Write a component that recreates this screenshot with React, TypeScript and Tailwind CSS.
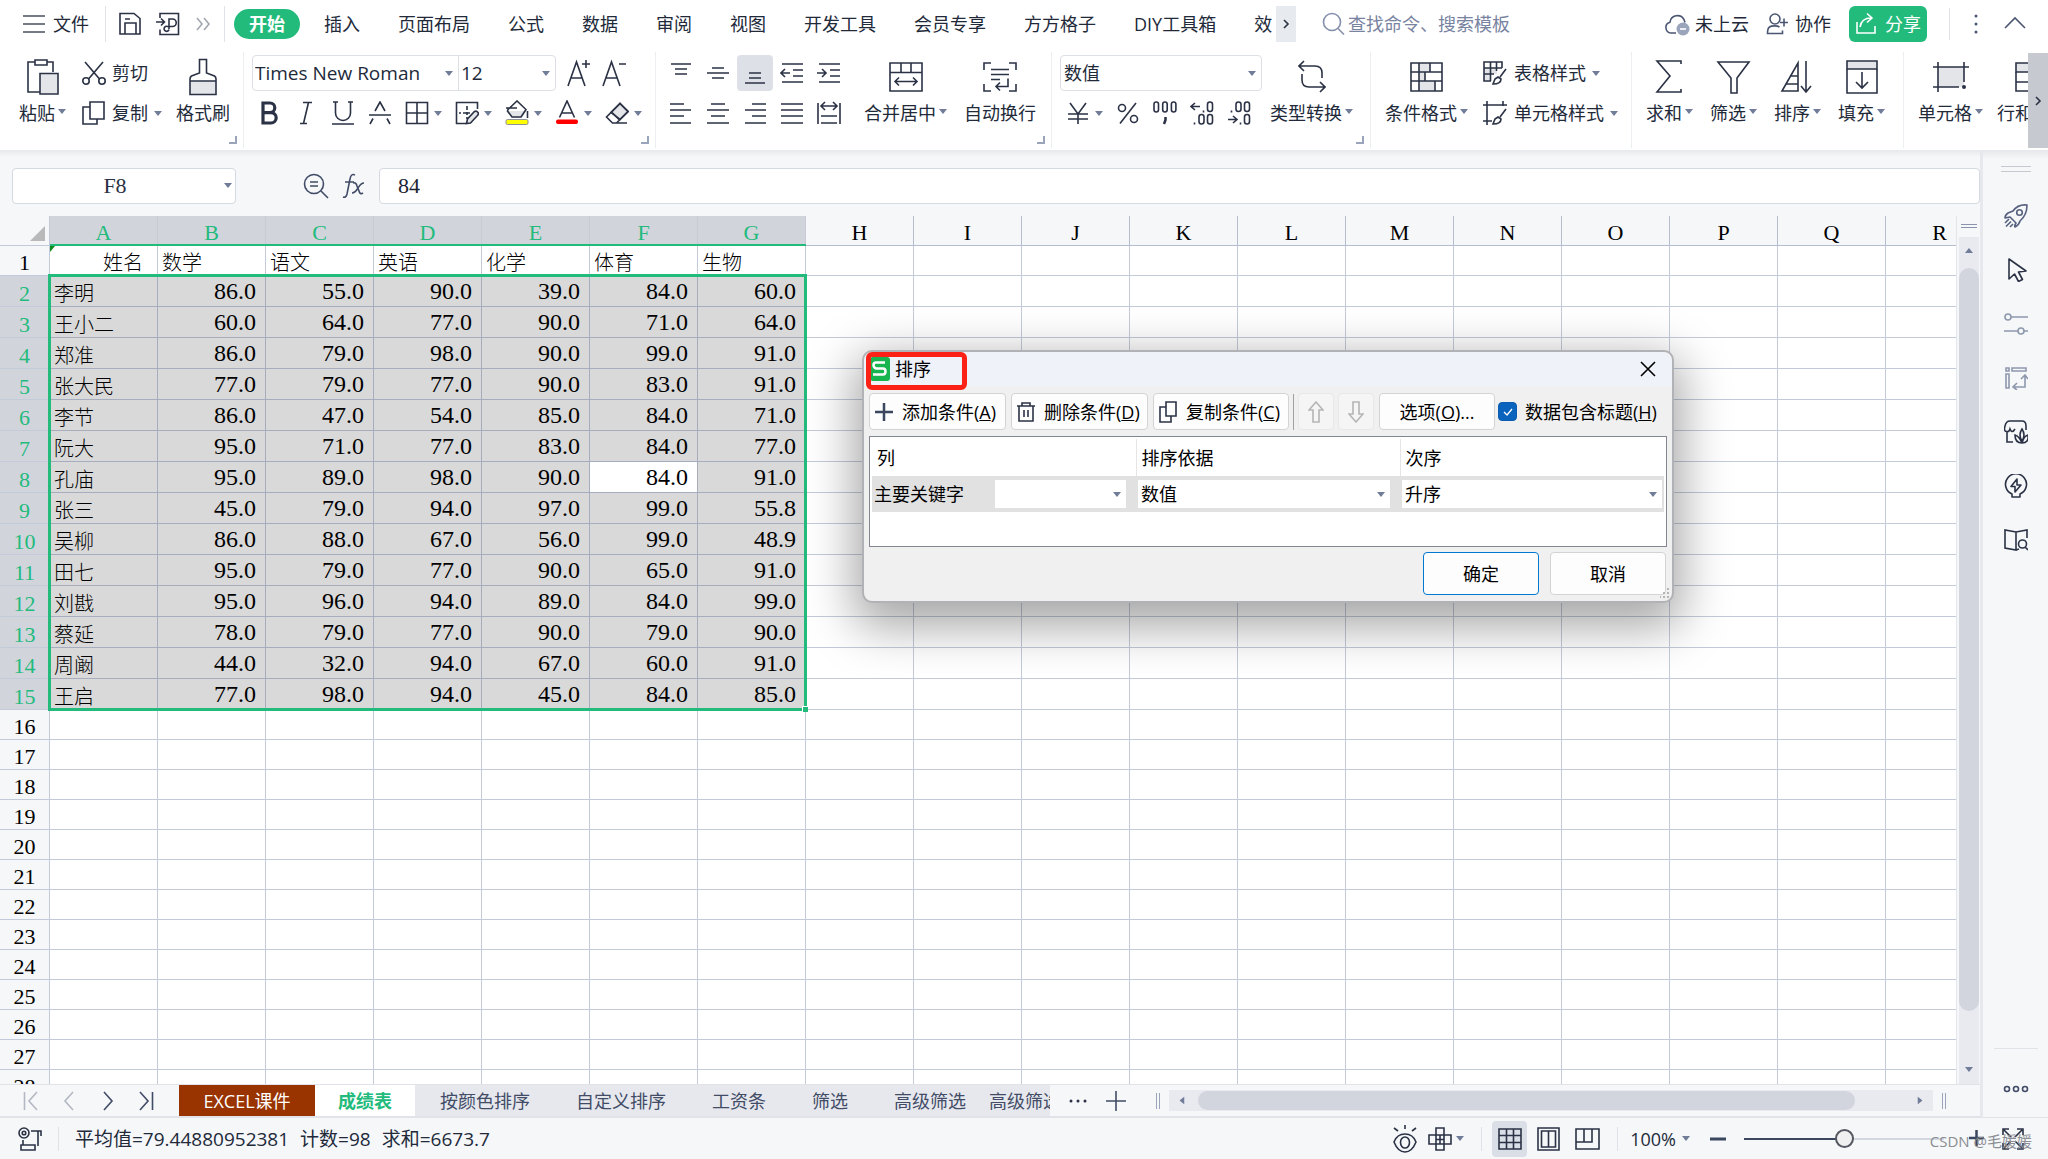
import type { ReactNode } from "react";

type IconProps = { w?: number; h?: number; className?: string; children: ReactNode };

function Icon({ w = 24, h = 24, className = "text-[#2b3245]", children }: IconProps) {
  return (
    <svg
      width={w}
      height={h}
      viewBox={`0 0 ${w} ${h}`}
      fill="none"
      stroke="currentColor"
      strokeWidth="1.6"
      className={`shrink-0 ${className}`}
      aria-hidden="true"
    >
      {children}
    </svg>
  );
}

function Caret({ className = "" }: { className?: string }) {
  return (
    <svg width="8" height="5" viewBox="0 0 8 5" className={`shrink-0 ${className}`} aria-hidden="true">
      <path d="M0 0h8L4 5z" fill="#707c98" />
    </svg>
  );
}

function BigButton({ icon, label, caret = true }: { icon: ReactNode; label: string; caret?: boolean }) {
  return (
    <button className="flex shrink-0 flex-col items-center">
      <span className="flex h-11 items-center">{icon}</span>
      <span className="flex h-7 items-center gap-[3px] whitespace-nowrap">
        {label}
        {caret && <Caret className="-mt-1" />}
      </span>
    </button>
  );
}

function RowButton({ icon, label, caret = true }: { icon: ReactNode; label: string; caret?: boolean }) {
  return (
    <button className="flex h-9 items-center gap-[6px] whitespace-nowrap">
      {icon}
      {label}
      {caret && <Caret />}
    </button>
  );
}

function IconButton({ label, caret = false, children }: { label: string; caret?: boolean; children: ReactNode }) {
  return (
    <button aria-label={label} className="flex h-9 items-center gap-[5px]">
      {children}
      {caret && <Caret />}
    </button>
  );
}

function Group({ className = "", corner = false, children }: { className?: string; corner?: boolean; children: ReactNode }) {
  return (
    <div className={`relative my-1 flex h-24 shrink-0 items-start border-r border-[#eceef1] pt-[3px] ${className}`}>
      {children}
      {corner && <span className="absolute right-[6px] bottom-1 h-2 w-2 border-r-2 border-b-2 border-[#9aa4ba]" />}
    </div>
  );
}

function Select({ label, value, className = "", selectClass = "" }: { label: string; value: string; className?: string; selectClass?: string }) {
  return (
    <div className={`relative flex items-center ${className}`}>
      <select aria-label={label} className={`h-full w-full appearance-none bg-transparent outline-none ${selectClass}`}>
        <option>{value}</option>
      </select>
      <Caret className="pointer-events-none absolute right-[5px]" />
    </div>
  );
}

const menuItems = ["插入", "页面布局", "公式", "数据", "审阅", "视图", "开发工具", "会员专享", "方方格子", "DIY工具箱", "效"];

function MenuBar() {
  return (
    <nav className="flex h-12 items-center">
      <button className="ml-[22px] flex items-center gap-[7px]">
        <Icon className="text-[#4a4f5c]">
          <path d="M1 4h22M1 12h22M1 20h22" />
        </Icon>
        文件
      </button>
      <span className="ml-4 h-9 w-px bg-[#dfe2e8]" />
      <button aria-label="保存" className="ml-3">
        <Icon>
          <path d="M2 1.500h14l6 5v15.500h-20zM7 22v-11h11v11M7 7h5" />
        </Icon>
      </button>
      <button aria-label="输出为PDF" className="ml-[14px]">
        <Icon>
          <path d="M4 6v-4.500h18.500v21h-18.500v-5M0 10h8M5 6.500l3.500 3.500L5 13.500" />
          <path d="M13 17v-10h3.500a3.500 3.500 0 0 1 0 7.500h-5a2.500 2.500 0 1 0 1.500 3" />
        </Icon>
      </button>
      <button aria-label="更多" className="ml-4">
        <Icon w={14} className="text-[#a2a6b0]">
          <path d="M1 6l5 6-5 6M8 6l5 6-5 6" />
        </Icon>
      </button>
      <span className="ml-[14px] h-9 w-px bg-[#dfe2e8]" />
      <button className="ml-[9px] h-[30px] rounded-full bg-[#22bb7c] px-[15px] font-bold text-white">开始</button>
      <div className="ml-6 flex w-[952px] shrink-0 gap-[38px] overflow-hidden whitespace-nowrap">
        {menuItems.map((item) => (
          <button key={item} className="shrink-0">
            {item}
          </button>
        ))}
      </div>
      <button aria-label="向右滚动" className="flex h-9 w-5 shrink-0 items-center justify-center bg-[#e7eaef]">
        <Icon w={8} h={12}>
          <path d="M2 2l4 4-4 4" />
        </Icon>
      </button>
      <label className="ml-[26px] flex min-w-0 items-center gap-[2px]">
        <Icon className="text-[#8590ac]">
          <circle cx="10" cy="10" r="8.500" />
          <path d="M16 16.500l6 6" />
        </Icon>
        <input
          aria-label="搜索"
          placeholder="查找命令、搜索模板"
          className="w-44 bg-transparent outline-none placeholder:text-[#78839f]"
        />
      </label>
      <div className="ml-auto flex shrink-0 items-center whitespace-nowrap">
        <button className="flex items-center gap-[5px]">
          <Icon w={26} className="text-[#4b5672]">
            <path d="M12 21H7a5.500 5.500 0 0 1-1-10.800A7.500 7.500 0 0 1 20 7.500l1 3" />
            <circle cx="19" cy="17" r="6.500" fill="#9aa5bb" stroke="none" />
            <path d="M16 17h6" stroke="#fff" />
          </Icon>
          未上云
        </button>
        <button className="ml-[17px] flex items-center gap-[7px]">
          <Icon w={22} className="text-[#4b5672]">
            <circle cx="9" cy="7" r="5" />
            <path d="M13.500 15c-2-1.500-8-1.500-10 0-1.500 1-2 3-2 6.500h15v-3M14 10.500h8M18 6.500v8" />
          </Icon>
          协作
        </button>
        <button className="ml-[18px] flex h-9 w-[78px] items-center justify-center gap-2 rounded-md bg-[#22bb7c] text-white">
          <Icon w={22} className="text-white">
            <path d="M2 10v11h18v-7M5 15c1-6 5-9 11-9M12 1.500l5 4.500-5 4.500" />
          </Icon>
          分享
        </button>
        <span className="ml-[22px] h-8 w-px bg-[#dfe2e8]" />
        <button aria-label="更多选项" className="ml-[23px]">
          <Icon w={6} className="text-[#4b5672]">
            <path d="M3 4v.1M3 12v.1M3 20v.1" strokeWidth="3" strokeLinecap="round" />
          </Icon>
        </button>
        <button aria-label="收起功能区" className="mr-[22px] ml-[25px]">
          <Icon w={22} className="text-[#4b5672]">
            <path d="M1 16L11 6l10 10" />
          </Icon>
        </button>
      </div>
    </nav>
  );
}

const alignTop = [
  { label: "顶端对齐", d: "M2 3h20M6 8h12M6 13h12" },
  { label: "垂直居中", d: "M1 12h22M6 7h12M6 17h12" },
  { label: "底端对齐", d: "M2 22h20M6 17h12M6 12h12" },
  { label: "减少缩进", d: "M2 3h21M13 9h10M13 15h10M2 21h21M1 12h9M5 8l-4 4 4 4" },
  { label: "增加缩进", d: "M2 3h21M13 9h10M13 15h10M2 21h21M0 12h9M5 8l4 4-4 4" },
];

const alignBottom = [
  { label: "左对齐", d: "M1 3h14M1 9h21M1 15h14M1 22h21" },
  { label: "居中", d: "M5 3h14M1 9h22M5 15h14M1 22h22" },
  { label: "右对齐", d: "M9 3h14M2 9h21M9 15h14M2 22h21" },
  { label: "两端对齐", d: "M1 3h22M1 9h22M1 15h22M1 22h22" },
  { label: "分散对齐", d: "M1 2v21M23 2v21M4 5h16M8 1L4 5l4 4M16 1l4 4-4 4M4 15h16M4 22h16" },
];

const tallIcons = [
  { label: "求和", d: "M29 5v-3H5l13 15L5 33h24v-3" },
  { label: "筛选", d: "M2 3h31L21 19v15h-6v-15z" },
  { label: "排序", d: "M18 4v28H2zM11 17h7M6 25h12M26 2v31M21 27l5 6 5-6" },
];

function Ribbon() {
  return (
    <div className="flex h-[102px] items-start">
      <div className="flex min-w-0 flex-1 overflow-hidden">
        <Group className="gap-[14px] pr-[13px] pl-[19px]" corner>
          <BigButton
            label="粘贴"
            icon={
              <Icon w={34} h={36}>
                <path d="M9 3H2v30h13M21 3h6v10M9 1h12v5H9z" />
                <path d="M14 14.500h18V35H14z" fill="#e3e5e8" />
              </Icon>
            }
          />
          <div className="ml-[2px] flex flex-col gap-1">
            <RowButton
              label="剪切"
              caret={false}
              icon={
                <Icon>
                  <circle cx="4" cy="20" r="3.200" />
                  <circle cx="20" cy="20" r="3.200" />
                  <path d="M3 1l14.500 17M21 1L6.500 18" />
                </Icon>
              }
            />
            <RowButton
              label="复制"
              icon={
                <Icon>
                  <path d="M8 1h14v17H8zM8 6H1v17h14v-5" />
                </Icon>
              }
            />
          </div>
          <BigButton
            label="格式刷"
            caret={false}
            icon={
              <Icon w={30} h={38}>
                <path d="M2 23h26v13H2z" fill="#e3e5e8" stroke="none" />
                <path d="M11.500 1.500h7V15l8 3q1.500 1 1.500 3v15.500H2V21q0-2 1.500-3l8-3zM2 23h26" />
              </Icon>
            }
          />
        </Group>

        <Group className="flex-col gap-1 pr-[13px] pl-2" corner>
          <div className="flex h-9 items-center">
            <div className="flex h-9 rounded border border-[#dcdfe5] text-[19px]">
              <Select label="字体" value="Times New Roman" className="w-[206px] border-r border-[#dcdfe5]" selectClass="pl-[2px]" />
              <Select label="字号" value="12" className="w-[96px]" selectClass="pl-[2px]" />
            </div>
            <button aria-label="增大字号" className="ml-[11px]">
              <Icon h={28}>
                <path d="M1 27L9.500 3 18 27M4 19h11M19 1v8M15 5h8" />
              </Icon>
            </button>
            <button aria-label="减小字号" className="ml-[11px]">
              <Icon h={28}>
                <path d="M1 27L9.500 3 18 27M4 19h11M17 5h7" />
              </Icon>
            </button>
          </div>
          <div className="ml-[5px] flex gap-[13px]">
            <IconButton label="加粗">
              <Icon>
                <path d="M6 2h7a4.800 4.800 0 0 1 0 9.600H6zM6 11.600h8a5 5 0 0 1 0 10.400H6z" strokeWidth="3.200" />
              </Icon>
            </IconButton>
            <IconButton label="倾斜">
              <Icon>
                <path d="M9 1.500h9M6 22.500h7M14.500 1.500l-5 21" />
              </Icon>
            </IconButton>
            <IconButton label="下划线">
              <Icon>
                <path d="M2 1h5M17 1h5M4.500 1v11a7.500 7.500 0 0 0 15 0V1M1 23h22" />
              </Icon>
            </IconButton>
            <IconButton label="删除线">
              <Icon>
                <path d="M7 10l5-9 5 9M1 14h22M5 17.500l-3 5.500M19 17.500l3 5.500" />
              </Icon>
            </IconButton>
            <IconButton label="边框" caret>
              <Icon>
                <path d="M1.500 1.500h21v21h-21zM12 1.500v21M1.500 12h21" />
              </Icon>
            </IconButton>
            <IconButton label="绘制边框" caret>
              <Icon>
                <path d="M1.500 23V1.500h21V8M1 22.500h10" />
                <path d="M12 5v4M12 11v3M12 16v2M4 12h2M8 12h7" />
                <path d="M11.500 22.500l1-4.500 7-7.500q2-1 3.500 1 1 1.500-.5 3L15.500 22z" fill="#e3e5e8" />
              </Icon>
            </IconButton>
            <IconButton label="填充颜色" caret>
              <Icon h={26}>
                <path d="M3 11h18l-4 7H7z" fill="#e3e5e8" stroke="none" />
                <path d="M3 9.500L12 1l9 8.500L16 17H7L2.500 11zM1 8h11M22.500 11v7" />
                <rect x="1" y="19.500" width="22" height="5" rx="1.500" fill="#ffff00" stroke="#8d9199" strokeWidth="1" />
              </Icon>
            </IconButton>
            <IconButton label="字体颜色" caret>
              <Icon h={26}>
                <path d="M4.500 17.500L12 1l7.500 16.500M7 13h10" />
                <rect x="1" y="19.500" width="22" height="4.500" rx="2" fill="#ff0000" stroke="none" />
              </Icon>
            </IconButton>
            <IconButton label="清除" caret>
              <Icon>
                <path d="M15 2.500l8 8-8 8-9-7z" fill="#e3e5e8" />
                <path d="M15 2.500L1.500 16l6 6h4L23 10.500zM6.500 11l8 8M7 22h15" />
              </Icon>
            </IconButton>
          </div>
        </Group>

        <Group className="gap-[17px] pr-[15px] pl-[7px]" corner>
          <div className="flex flex-col gap-1">
            <div className="flex gap-px">
              {alignTop.map((item) => (
                <button
                  key={item.label}
                  aria-label={item.label}
                  className={`flex h-9 w-9 items-center justify-center rounded ${item.label === "底端对齐" ? "bg-[#dde1e7]" : ""}`}
                >
                  <Icon>
                    <path d={item.d} />
                  </Icon>
                </button>
              ))}
            </div>
            <div className="flex gap-px">
              {alignBottom.map((item) => (
                <button key={item.label} aria-label={item.label} className="flex h-9 w-9 items-center justify-center">
                  <Icon>
                    <path d={item.d} />
                  </Icon>
                </button>
              ))}
            </div>
          </div>
          <BigButton
            label="合并居中"
            icon={
              <Icon w={34} h={30}>
                <path d="M1 1h32v28H1zM1 10.500h32M12 1v9.500M22 1v9.500M6 19.500h22M10 15.500l-4 4 4 4M24 15.500l4 4-4 4" />
              </Icon>
            }
          />
          <BigButton
            label="自动换行"
            caret={false}
            icon={
              <Icon w={34} h={30}>
                <path d="M8 1H1v7M26 1h7v7M8 29H1v-7M26 29h7v-7M8 7.500h18M8 12.500h18M8 17.500h9M25 16.500v8H13M17 20.500l-4 4 4 4" />
              </Icon>
            }
          />
        </Group>

        <Group className="gap-2 pr-[17px] pl-2" corner>
          <div className="flex flex-col gap-1">
            <Select label="数字格式" value="数值" className="h-9 w-[202px] rounded border border-[#dcdfe5]" selectClass="pl-[3px]" />
            <div className="ml-[6px] flex gap-[13px]">
              <IconButton label="货币格式" caret>
                <Icon>
                  <path d="M4 2l8 11 8-11M2 13h20M2 18h20M12 13v10" />
                </Icon>
              </IconButton>
              <IconButton label="百分比">
                <Icon>
                  <circle cx="6" cy="7" r="3.500" />
                  <circle cx="18" cy="18" r="3.500" />
                  <path d="M20 2L4 22.500" />
                </Icon>
              </IconButton>
              <IconButton label="千位分隔">
                <Icon>
                  <rect x="1" y="1" width="4.500" height="10" rx="2.200" />
                  <rect x="9.700" y="1" width="4.500" height="10" rx="2.200" />
                  <rect x="18.400" y="1" width="4.500" height="10" rx="2.200" />
                  <path d="M12.500 16v3l-1.500 4" strokeWidth="2.500" />
                </Icon>
              </IconButton>
              <IconButton label="增加小数位">
                <Icon>
                  <path d="M1 5.500h9M5 2L1 5.500 5 9M13.500 9.500v2M4.500 21.500v2" />
                  <rect x="17.500" y="1" width="5" height="9.500" rx="2.400" />
                  <rect x="9" y="13.500" width="5" height="9.500" rx="2.400" />
                  <rect x="17.500" y="13.500" width="5" height="9.500" rx="2.400" />
                </Icon>
              </IconButton>
              <IconButton label="减少小数位">
                <Icon>
                  <path d="M1 18.500h9M6 15l4 3.500L6 22M4.500 9.500v2M13.500 21.500v2" />
                  <rect x="9" y="1" width="5" height="9.500" rx="2.400" />
                  <rect x="17.500" y="1" width="5" height="9.500" rx="2.400" />
                  <rect x="17.500" y="13.500" width="5" height="9.500" rx="2.400" />
                </Icon>
              </IconButton>
            </div>
          </div>
          <BigButton
            label="类型转换"
            icon={
              <Icon w={28} h={34}>
                <path d="M6 1L1 6l5 5M1 6h16q7 0 7 7v5M4 14v6q0 7 7 7h15M22 22l5 5-5 5" />
              </Icon>
            }
          />
        </Group>

        <Group className="gap-[15px] pr-[13px] pl-[14px]">
          <BigButton
            label="条件格式"
            icon={
              <Icon w={33} h={30}>
                <path d="M9 1h11v9H9zM9 10h6v9H9zM9 19h16v10H9z" fill="#e3e5e8" stroke="none" />
                <path d="M1 1h31v28H1zM1 10h31M1 19h31M9 1v28M20 1v9M15 10v9M25 19v10" />
              </Icon>
            }
          />
          <div className="flex flex-col gap-1">
            <RowButton
              label="表格样式"
              icon={
                <Icon w={25}>
                  <path d="M1 7h13v6H8v7H1z" fill="#e3e5e8" stroke="none" />
                  <path d="M8 20H1V1h18v6M1 7h18M1 13h10M7.500 1v19M13.500 1v9M23 8l-6 8M12 18l3-2 3 2q0 5-8 5z" />
                </Icon>
              }
            />
            <RowButton
              label="单元格样式"
              icon={
                <Icon w={25}>
                  <path d="M0 4h24M4 0v24M20 0v5M0 20h9M23 8l-6 8M12 18l3-2 3 2q0 5-8 5z" />
                </Icon>
              }
            />
          </div>
        </Group>

        <Group className="gap-[17px] pr-[18px] pl-[14px]">
          {tallIcons.map((item) => (
            <BigButton
              key={item.label}
              label={item.label}
              icon={
                <Icon w={35} h={36}>
                  <path d={item.d} />
                </Icon>
              }
            />
          ))}
          <BigButton
            label="填充"
            icon={
              <Icon w={34} h={36}>
                <path d="M2 2h30v8H2z" fill="#e3e5e8" />
                <path d="M2 10v24h30V10M17 13v16M11 23l6 6 6-6" />
              </Icon>
            }
          />
        </Group>

        <Group className="gap-[14px] pl-[14px]">
          <BigButton
            label="单元格"
            icon={
              <Icon w={36} h={32}>
                <path d="M5 6h26v20H5z" fill="#e3e5e8" stroke="none" />
                <path d="M0 6h36M5 1v30M31 1v20M0 26h26" />
                <path d="M31 26v.1" strokeWidth="4" strokeLinecap="round" />
              </Icon>
            }
          />
          <BigButton
            label="行和列"
            icon={
              <Icon w={30} h={30}>
                <path d="M1 1h28v9H1z" fill="#e3e5e8" />
                <path d="M1 10v19h28V10M1 20h28" />
              </Icon>
            }
          />
        </Group>
      </div>
      <button aria-label="功能区向右滚动" className="mt-[5px] flex h-[95px] w-5 items-center justify-center bg-[#c7c9d0]">
        <Icon w={8} h={12}>
          <path d="M2 2l4 4-4 4" />
        </Icon>
      </button>
    </div>
  );
}

function FormulaBar() {
  return (
    <div className="flex h-[66px] items-center bg-linear-to-b from-[#e6e8eb] from-0% to-[#f5f7f9] to-10% pt-[5px] pl-3 font-['Liberation_Serif','Noto_Sans_CJK_SC',serif] text-[22px]">
      <div className="relative flex h-9 w-56 items-center rounded border border-[#d5d9e0] bg-white">
        <input aria-label="名称框" defaultValue="F8" className="w-[204px] bg-transparent text-center text-[#2b3245] outline-none" />
        <Caret className="absolute right-[3px]" />
      </div>
      <button aria-label="查找公式" className="ml-[67px]">
        <Icon w={26} h={26} className="text-[#424c66]">
          <circle cx="11" cy="11" r="9.500" />
          <path d="M7 9h8M7 13h8M18 18l7 7" />
        </Icon>
      </button>
      <button aria-label="插入函数" className="ml-[13px]">
        <Icon h={26} className="text-[#424c66]">
          <path d="M13 2q-4-2-5 4L5 21q-1 4-4 3M3 9h9M11 10q3-1 4 3l2 5q1 4 4 2M22 10q-3 0-6 5t-6 5" />
        </Icon>
      </button>
      <input
        aria-label="编辑栏"
        defaultValue="84"
        className="ml-[13px] h-9 min-w-0 flex-1 rounded border border-[#d5d9e0] bg-white px-[18px] text-[#1d2433] outline-none"
      />
    </div>
  );
}

const columns = "ABCDEFGHIJKLMNOPQRSTUVWXYZ".split("");

const subjects = ["姓名", "数学", "语文", "英语", "化学", "体育", "生物"];

const scores = [
  ["李明", "86.0", "55.0", "90.0", "39.0", "84.0", "60.0"],
  ["王小二", "60.0", "64.0", "77.0", "90.0", "71.0", "64.0"],
  ["郑准", "86.0", "79.0", "98.0", "90.0", "99.0", "91.0"],
  ["张大民", "77.0", "79.0", "77.0", "90.0", "83.0", "91.0"],
  ["李节", "86.0", "47.0", "54.0", "85.0", "84.0", "71.0"],
  ["阮大", "95.0", "71.0", "77.0", "83.0", "84.0", "77.0"],
  ["孔庙", "95.0", "89.0", "98.0", "90.0", "84.0", "91.0"],
  ["张三", "45.0", "79.0", "94.0", "97.0", "99.0", "55.8"],
  ["吴柳", "86.0", "88.0", "67.0", "56.0", "99.0", "48.9"],
  ["田七", "95.0", "79.0", "77.0", "90.0", "65.0", "91.0"],
  ["刘戡", "95.0", "96.0", "94.0", "89.0", "84.0", "99.0"],
  ["蔡延", "78.0", "79.0", "77.0", "90.0", "79.0", "90.0"],
  ["周阚", "44.0", "32.0", "94.0", "67.0", "60.0", "91.0"],
  ["王启", "77.0", "98.0", "94.0", "45.0", "84.0", "85.0"],
];

const emptyRows = Array.from({ length: 25 }, (_, i) => i + 16);

const rowHead = "border-r border-b border-[#c3cad9] text-[22px] font-normal align-bottom";

function EmptyCells({ from }: { from: number }) {
  return columns.slice(from).map((column) => <td key={column} className="border-r border-b border-[#c3cad9]" />);
}

function Sheet() {
  return (
    <div className="min-w-0 flex-1 overflow-hidden bg-white">
      <div className="relative w-max">
        <table className="w-[2858px] table-fixed border-separate border-spacing-0 font-['Liberation_Serif','Noto_Sans_CJK_SC',serif] leading-6 text-black">
          <thead>
            <tr className="h-[30px]">
              <th className="w-[50px] border-r border-b border-[#c3cad9] bg-[#f5f7f9] align-bottom">
                <svg width="15" height="15" viewBox="0 0 15 15" className="mr-1 mb-1 ml-auto" aria-hidden="true">
                  <path d="M15 0v15H0z" fill="#b9b9b9" />
                </svg>
              </th>
              {columns.map((column, index) => (
                <th
                  key={column}
                  className={`border-r border-b p-0 align-bottom text-[22px] font-normal ${
                    index < 7 ? "border-r-[#c8cbd6] border-b-[#22bb7c] bg-[#d2d4dc] text-[#22bb7c]" : "border-[#b4bccd] bg-[#f5f7f9]"
                  }`}
                >
                  {column}
                </th>
              ))}
            </tr>
          </thead>
          <tbody>
            <tr className="h-[30px]">
              <th className={`bg-[#f5f7f9] ${rowHead}`}>1</th>
              {subjects.map((subject, index) => (
                <td
                  key={subject}
                  className={`border-r border-b border-[#c3cad9] align-bottom text-xl leading-6 font-light ${index === 0 ? "pr-[14px] text-right" : "pl-1"}`}
                >
                  {subject}
                </td>
              ))}
              <EmptyCells from={7} />
            </tr>
            {scores.map((row, rowIndex) => (
              <tr key={row[0]} className="h-[31px]">
                <th className={`bg-[#d2d4dc] text-[#22bb7c] ${rowHead}`}>{rowIndex + 2}</th>
                {row.map((value, index) =>
                  index === 0 ? (
                    <td key={index} className="border-r border-b border-[#a5adbe] bg-[#d9d9d9] pl-1 align-bottom text-xl leading-6 font-light">
                      {value}
                    </td>
                  ) : (
                    <td
                      key={index}
                      className={`border-r border-b border-[#a5adbe] pr-[9px] text-right text-2xl leading-6 ${
                        rowIndex === 6 && index === 5 ? "bg-white" : "bg-[#d9d9d9]"
                      }`}
                    >
                      {value}
                    </td>
                  ),
                )}
                <EmptyCells from={7} />
              </tr>
            ))}
            {emptyRows.map((row) => (
              <tr key={row} className="h-[30px]">
                <th className={`bg-[#f5f7f9] ${rowHead}`}>{row}</th>
                <EmptyCells from={0} />
              </tr>
            ))}
          </tbody>
        </table>
        <svg width="6" height="6" className="absolute top-[30px] left-[50px]" aria-hidden="true">
          <path d="M0 0h5L0 6z" fill="#108a1c" />
        </svg>
        <div className="absolute top-7 left-[50px] h-[2px] w-[756px] bg-[#22bb7c]" />
        <div className="absolute top-[58px] left-12 h-[437px] w-[759px] border-3 border-[#22bb7c]">
          <span className="absolute -right-1 -bottom-1 h-[6px] w-[6px] border-t border-l border-white bg-[#22bb7c]" />
        </div>
      </div>
    </div>
  );
}

function VerticalScroll() {
  return (
    <div className="flex w-6 flex-col items-center border-l border-[#e3e5eb] bg-[#f5f7f9]">
      <span className="mt-2 mb-[9px] h-1 w-4 border-y border-[#8a95ad]" />
      <div className="flex w-5 flex-1 flex-col items-center bg-[#e9eaf0] pt-[11px] pb-3">
        <Caret className="rotate-180" />
        <div className="mt-[15px] flex w-full flex-1 flex-col">
          <span className="basis-[93%] rounded-full bg-[#d2d5dd]" />
        </div>
        <Caret />
      </div>
    </div>
  );
}

const sheetTabs = ["按颜色排序", "自定义排序", "工资条", "筛选", "高级筛选"];

function SheetTabs() {
  return (
    <div className="flex h-[33px] items-center border-y border-[#e1e3e9] bg-[#f5f7f9] text-[#424c66]">
      <div className="flex w-[179px] shrink-0 items-center gap-[25px] pl-[23px]">
        <button aria-label="第一个">
          <Icon w={15} h={20} className="text-[#b3b8c2]">
            <path d="M1.500 1v18M14 1L6 10l8 9" />
          </Icon>
        </button>
        <button aria-label="上一个">
          <Icon w={11} h={20} className="text-[#b3b8c2]">
            <path d="M10 1L2 10l8 9" />
          </Icon>
        </button>
        <button aria-label="下一个" className="ml-1">
          <Icon w={11} h={20} className="text-[#424c66]">
            <path d="M1 1l8 9-8 9" />
          </Icon>
        </button>
        <button aria-label="最后一个">
          <Icon w={15} h={20} className="text-[#424c66]">
            <path d="M13.500 1v18M1 1l8 9-8 9" />
          </Icon>
        </button>
      </div>
      <div className="flex h-full w-[871px] shrink-0 overflow-hidden bg-[#e6e8ee] whitespace-nowrap">
        <button className="w-[136px] shrink-0 bg-[#993300] text-white">EXCEL课件</button>
        <button className="w-[100px] shrink-0 bg-white font-bold text-[#22bb7c]">成绩表</button>
        <div className="ml-[25px] flex gap-[46px]">
          {sheetTabs.map((tab) => (
            <button key={tab} className="shrink-0">
              {tab}
            </button>
          ))}
        </div>
        <button className="ml-[23px] shrink-0">高级筛选</button>
      </div>
      <button aria-label="全部工作表" className="ml-[18px]">
        <Icon w={20}>
          <path d="M3 12v.1M10 12v.1M17 12v.1" strokeWidth="3" strokeLinecap="round" />
        </Icon>
      </button>
      <button aria-label="新建工作表" className="ml-[18px]">
        <Icon w={20} h={20} className="text-[#424c66]">
          <path d="M10 0v20M0 10h20" />
        </Icon>
      </button>
      <span className="ml-[30px] h-4 w-1 border-x border-[#9aa4ba]" />
      <div className="ml-[9px] flex h-[21px] min-w-0 flex-1 items-center bg-[#e9eaf0] px-[9px]">
        <Caret className="rotate-90" />
        <div className="mx-3 flex h-[19px] flex-1">
          <span className="basis-[93%] rounded-full bg-[#d2d5dd]" />
        </div>
        <Caret className="-rotate-90" />
      </div>
      <span className="mr-[34px] ml-[9px] h-4 w-1 border-x border-[#9aa4ba]" />
    </div>
  );
}

const muted = "text-[#8e98ad]";

function SidePanel() {
  return (
    <aside className="flex w-[68px] flex-col items-center border-l-3 border-[#e6e8ee] bg-linear-to-b from-[#e6e8eb] from-0% to-[#f5f7f9] to-1%">
      <span className="mt-4 h-[6px] w-[30px] border-y border-[#c5c9d0]" />
      <div className="mt-8 flex flex-col gap-[30px]">
        <button aria-label="快捷工具">
          <Icon className="text-[#56617f]">
            <path d="M23 1q-9-1-14 6l-5 2q-3 2-3 5l5-1 6 6q-2 3-1 4 4-2 5-6 7-6 7-16z" strokeLinejoin="round" />
            <circle cx="15.500" cy="8.500" r="2.800" />
            <path d="M5 15l-4 4M7 17.500l-5 5M9 20l-3 3" />
          </Icon>
        </button>
        <button aria-label="选择">
          <Icon>
            <path d="M5 1v20l5.500-5 4 7.500 4-2-4-7.500 7.500-1z" strokeLinejoin="round" />
          </Icon>
        </button>
        <button aria-label="设置">
          <Icon className={muted}>
            <circle cx="4" cy="5" r="3" />
            <circle cx="17" cy="19" r="3" />
            <path d="M7 5h17M0 19h14M20 19h4" />
          </Icon>
        </button>
        <button aria-label="对象属性">
          <Icon className={muted}>
            <path d="M2 2h3v3H2zM8 2h14v3H8zM2 8h3v14H2zM21 9v12H9M17 13l4-4 3 4M13 17l-4 4 4 3" />
          </Icon>
        </button>
        <button aria-label="稻壳资源">
          <Icon>
            <path d="M9 22H3V12M1 11q-1-2 0-5 1-5 5-5h12q4 0 4 5v4M1 11q4 2 5-2 2 5 5 0" />
            <path d="M18 23q-7 0-7-8 4 1 7 8zM18 23q7 0 6-8-4 1-6 8zM18 21q-4-6 0-12 4 6 0 12z" />
          </Icon>
        </button>
        <button aria-label="智能推荐">
          <Icon>
            <path d="M8 23v-3a10.500 10.500 0 1 1 8 0v3zM13 5l-6 7.500h4V18l6-7h-4z" strokeLinejoin="round" />
          </Icon>
        </button>
        <button aria-label="帮助">
          <Icon>
            <path d="M12 4v18L1 20V2l11 2 11-2v8M12 22l3-1" />
            <circle cx="18.500" cy="16" r="4" />
            <path d="M21 19l3 3" />
          </Icon>
        </button>
      </div>
      <button aria-label="更多工具" className="mt-auto flex h-[69px] w-11 items-center justify-center border-t border-[#e1e3e9] pt-3">
        <Icon w={26} h={8} className="text-[#424c66]">
          <circle cx="4" cy="4" r="2.500" />
          <circle cx="13" cy="4" r="2.500" />
          <circle cx="22" cy="4" r="2.500" />
        </Icon>
      </button>
    </aside>
  );
}

function StatusBar() {
  return (
    <footer className="relative flex h-[42px] items-center border-t border-[#e1e3e9] bg-[#f5f7f9] whitespace-nowrap">
      <button aria-label="宏" className="ml-[18px]">
        <Icon>
          <circle cx="6" cy="6" r="5" />
          <circle cx="6" cy="6" r="1.800" />
          <path d="M13 4h10v5M20 4v15M3 18h14v5H3zM5 18v-5" />
        </Icon>
      </button>
      <span className="ml-4 h-6 w-px bg-[#dfe2e8]" />
      <p className="ml-4 flex gap-[11px] text-[19px]">
        <span>平均值=79.44880952381</span>
        <span>计数=98</span>
        <span>求和=6673.7</span>
      </p>
      <div className="ml-auto flex shrink-0 items-center">
        <button aria-label="护眼模式">
          <Icon h={28}>
            <path d="M1 17q3-8 11-8t11 8q-4 10-11 10T1 17zM12 0v4M1 3l4 3M23 3l-4 3" />
            <ellipse cx="12" cy="17.500" rx="4.500" ry="5.500" />
          </Icon>
        </button>
        <button aria-label="阅读模式" className="ml-[11px] flex items-center gap-1">
          <Icon>
            <path d="M8 1h8v22H8zM1 8h22v9H1zM12 8v9M8 12.500h8" />
          </Icon>
          <Caret />
        </button>
        <span className="ml-[17px] h-6 w-px bg-[#dfe2e8]" />
        <button aria-label="普通视图" className="ml-[10px] flex h-9 w-[35px] items-center justify-center rounded bg-[#dadfe7]">
          <Icon>
            <path d="M1 2h22v20H1zM1 8.500h22M1 15.500h22M8.500 2v20M15.500 2v20" />
          </Icon>
        </button>
        <button aria-label="页面布局视图" className="ml-[10px]">
          <Icon>
            <path d="M1 1h21v22H1zM4.500 4h14v16h-14zM11.500 4v16" />
          </Icon>
        </button>
        <button aria-label="分页预览" className="ml-[14px]">
          <Icon w={25}>
            <path d="M1 2h23v20H1zM9 2v13M1 15h16V2" />
          </Icon>
        </button>
        <span className="ml-[17px] h-6 w-px bg-[#dfe2e8]" />
        <button className="ml-3 flex items-center gap-[6px] text-lg">
          100%
          <Caret />
        </button>
        <button aria-label="缩小" className="ml-5">
          <Icon w={16} className="text-[#3b465f]">
            <path d="M0 12h16" strokeWidth="3" />
          </Icon>
        </button>
        <input
          type="range"
          aria-label="显示比例"
          defaultValue="50"
          className="ml-[18px] h-[2px] w-[200px] appearance-none bg-linear-to-r from-[#3b465f] from-50% to-[#d2d6df] to-50% [&::-webkit-slider-thumb]:h-[19px] [&::-webkit-slider-thumb]:w-[19px] [&::-webkit-slider-thumb]:appearance-none [&::-webkit-slider-thumb]:rounded-full [&::-webkit-slider-thumb]:border-2 [&::-webkit-slider-thumb]:border-[#55585f] [&::-webkit-slider-thumb]:bg-[#f0f0f0]"
        />
        <button aria-label="放大" className="ml-[25px]">
          <Icon w={15} className="text-[#3b465f]">
            <path d="M0 11h15M7.500 3v16" strokeWidth="2.500" />
          </Icon>
        </button>
        <button aria-label="全屏" className="mr-6 ml-[18px]">
          <Icon w={22}>
            <path d="M1 8V2h6M15 2h6v6M1 16v6h6M15 22h6v-6M2 3l7 7M20 3l-7 7M2 21l7-7M20 21l-7-7" />
          </Icon>
        </button>
      </div>
      <span className="absolute right-4 bottom-[6px] text-[15px] text-[#8b8d92]">CSDN @毛媛媛</span>
    </footer>
  );
}

const dialogButton = "flex h-[37px] items-center rounded border border-[#d3d3d3] bg-[#fdfdfd]";

function SortDialog() {
  return (
    <section
      role="dialog"
      aria-label="排序"
      className="absolute top-[350px] left-[862px] flex w-[812px] flex-col rounded-[10px] border-2 border-[#b0b2b5] bg-[#f0f0f0] pb-[6px] whitespace-nowrap text-black shadow-[0_16px_48px_8px_rgba(0,0,0,0.35)]"
    >
      <header className="flex h-[34px] items-center rounded-t-[10px] bg-[#f0f2f9] pr-4 pl-[6px]">
        <svg width="20" height="24" viewBox="0 0 20 24" aria-hidden="true">
          <rect width="20" height="24" rx="3" fill="#17b450" />
          <path d="M15 5.500H6Q3.500 5.500 3.500 8t2.500 3.500h7q2.500 0 2.500 3T13 17.500H3" fill="none" stroke="#fff" strokeWidth="2.500" />
        </svg>
        <h1 className="ml-[5px]">排序</h1>
        <button aria-label="关闭" className="ml-auto">
          <Icon w={16} h={16} className="text-black">
            <path d="M1 1l14 14M15 1L1 15" />
          </Icon>
        </button>
      </header>
      <div className="absolute top-0 left-[2px] h-[38px] w-[101px] rounded-md border-5 border-[#fb2116]" />

      <div className="mt-[7px] flex items-center pl-[5px]">
        <button className={`w-[137px] gap-[9px] pl-[5px] ${dialogButton}`}>
          <Icon w={18} h={18} className="text-[#3b465f]">
            <path d="M9 0v18M0 9h18" strokeWidth="2.500" />
          </Icon>
          <span>
            添加条件(<u>A</u>)
          </span>
        </button>
        <button className={`ml-[5px] w-[137px] gap-[9px] pl-[5px] ${dialogButton}`}>
          <Icon w={18} h={20}>
            <path d="M0 4h18M5 4V1h8v3M2 4v15h14V4M7 8v7M11 8v7" />
          </Icon>
          <span>
            删除条件(<u>D</u>)
          </span>
        </button>
        <button className={`ml-[5px] w-[136px] gap-[9px] pl-[5px] ${dialogButton}`}>
          <Icon w={18} h={22}>
            <path d="M7 1h10v14H7zM7 6H1v15h11v-6" />
          </Icon>
          <span>
            复制条件(<u>C</u>)
          </span>
        </button>
        <span className="ml-1 h-9 w-px bg-[#a0a0a0]" />
        {["M8 1l7 8h-4v12H5V9H1z", "M8 21l7-8h-4V1H5v12H1z"].map((d, i) => (
          <button
            key={d}
            aria-label={i === 0 ? "上移" : "下移"}
            className="ml-1 flex h-[37px] w-9 items-center justify-center rounded border border-[#e8e8e8] bg-[#f5f5f5]"
          >
            <Icon w={16} h={22} className="text-[#b5b5b5]">
              <path d={d} />
            </Icon>
          </button>
        ))}
        <button className={`ml-[5px] w-[116px] justify-center ${dialogButton}`}>
          <span>
            选项(<u>O</u>)...
          </span>
        </button>
        <label className="ml-[3px] flex items-center gap-2">
          <span className="relative flex h-[19px] w-[19px]">
            <input type="checkbox" defaultChecked className="h-[19px] w-[19px] appearance-none rounded border border-[#0a5cb0] bg-[#0a63bd]" />
            <Icon w={19} h={19} className="pointer-events-none absolute text-white">
              <path d="M6 10l3 3 5-6" strokeWidth="1.300" />
            </Icon>
          </span>
          <span>
            数据包含标题(<u>H</u>)
          </span>
        </label>
      </div>

      <div className="mx-[5px] mt-[6px] h-[111px] border border-[#828790] bg-white p-[2px]">
        <table className="w-full table-fixed">
          <thead>
            <tr className="h-[37px] text-left">
              <th className="border-r border-[#e5e5e5] p-0 pl-[5px] font-normal">列</th>
              <th className="border-r border-[#e5e5e5] p-0 pl-[5px] font-normal">排序依据</th>
              <th className="p-0 pl-[5px] font-normal">次序</th>
            </tr>
          </thead>
          <tbody>
            <tr className="h-9 bg-[#e1e1e1]">
              <td className="p-0">
                <div className="flex items-center justify-between pr-[10px] pl-[2px]">
                  主要关键字
                  <Select label="主要关键字" value="" className="h-7 w-[131px] bg-white" />
                </div>
              </td>
              <td className="p-0 pr-[10px] pl-[2px]">
                <Select label="排序依据" value="数值" className="h-7 bg-white" selectClass="pl-[3px]" />
              </td>
              <td className="p-0 pr-[2px] pl-[2px]">
                <Select label="次序" value="升序" className="h-7 bg-white" selectClass="pl-[3px]" />
              </td>
            </tr>
          </tbody>
        </table>
      </div>

      <div className="mt-[5px] flex justify-end gap-[11px] pr-[6px]">
        <button className="h-[43px] w-[116px] rounded border border-[#0078d4] bg-[#fdfdfd]">确定</button>
        <button className="h-[43px] w-[116px] rounded border border-[#d3d3d3] bg-[#fdfdfd]">取消</button>
      </div>
      <svg width="10" height="10" className="absolute right-[2px] bottom-[3px]" aria-hidden="true">
        <path d="M7 0h2v2H7zM7 4h2v2H7zM7 8h2v2H7zM3 4h2v2H3zM3 8h2v2H3zM0 8h1v2H0z" fill="#b5b5b5" />
      </svg>
    </section>
  );
}

export default function App() {
  return (
    <div className="relative flex h-screen flex-col overflow-hidden bg-white font-['Open_Sans','Noto_Sans_CJK_SC',sans-serif] text-lg leading-6 text-[#222a3a]">
      <header className="shrink-0">
        <MenuBar />
        <Ribbon />
      </header>
      <main className="flex min-h-0 flex-1">
        <div className="flex min-w-0 flex-1 flex-col">
          <FormulaBar />
          <div className="flex min-h-0 flex-1">
            <Sheet />
            <VerticalScroll />
          </div>
          <SheetTabs />
        </div>
        <SidePanel />
      </main>
      <StatusBar />
      <SortDialog />
    </div>
  );
}
